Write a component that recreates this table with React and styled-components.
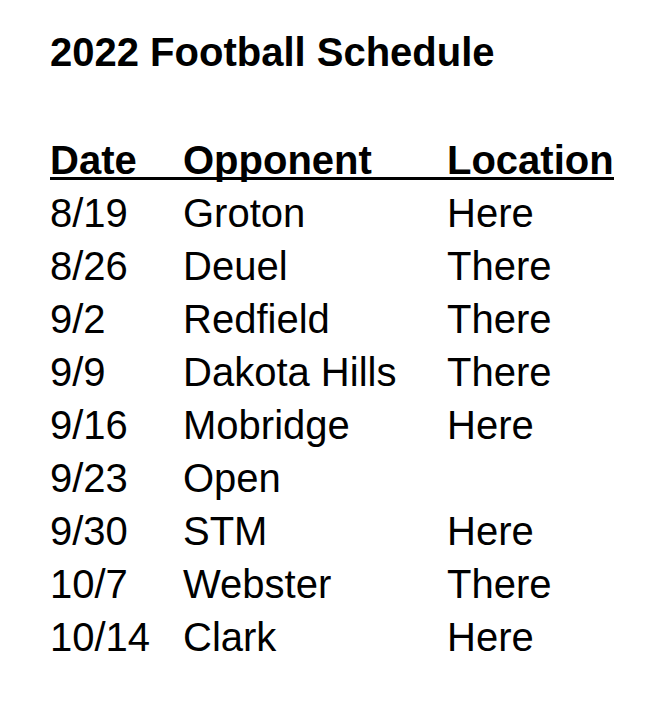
import React from 'react'
import styled, { createGlobalStyle } from 'styled-components'

const Global = createGlobalStyle`
  body {
    margin: 0;
    background: #fff;
    font-family: "Liberation Sans", Arial, sans-serif;
    color: #000;
  }
`

const Page = styled.div`
  padding: 26px 0 0 50px;
  font-size: 40px;
  line-height: 53px;
`

const Title = styled.h1`
  margin: 0 0 55px;
  font-size: 40px;
  font-weight: 700;
  line-height: 53px;
`

const Table = styled.div`
  display: grid;
  grid-template-columns: 133px 264px auto;
  justify-content: start;
`

const HeadCell = styled.div`
  font-weight: 700;
  height: 43px;
  margin-bottom: 7px;
  border-bottom: 3px solid #000;
  white-space: nowrap;
  justify-self: ${(props) => (props.last ? 'start' : 'stretch')};
`

const Cell = styled.div`
  white-space: nowrap;
  height: 53px;
`

const games = [
  ['8/19', 'Groton', 'Here'],
  ['8/26', 'Deuel', 'There'],
  ['9/2', 'Redfield', 'There'],
  ['9/9', 'Dakota Hills', 'There'],
  ['9/16', 'Mobridge', 'Here'],
  ['9/23', 'Open', ''],
  ['9/30', 'STM', 'Here'],
  ['10/7', 'Webster', 'There'],
  ['10/14', 'Clark', 'Here'],
]

const App = () => {
  return (
    <>
      <Global />
      <Page>
        <Title>2022 Football Schedule</Title>
        <Table>
          <HeadCell>Date</HeadCell>
          <HeadCell>Opponent</HeadCell>
          <HeadCell last>Location</HeadCell>
          {games.map(([date, opp, loc]) => (
            <React.Fragment key={date}>
              <Cell>{date}</Cell>
              <Cell>{opp}</Cell>
              <Cell>{loc}</Cell>
            </React.Fragment>
          ))}
        </Table>
      </Page>
    </>
  )
}

export default App
